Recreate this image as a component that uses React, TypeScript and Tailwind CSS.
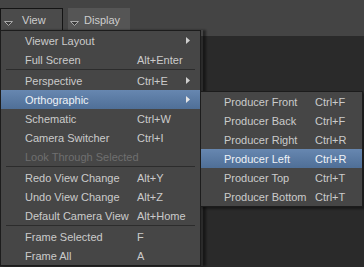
import React from "react";

type Item =
  | { type: "sep" }
  | { type: "item"; label: string; shortcut?: string; sub?: boolean; active?: boolean; disabled?: boolean };

const mainItems: Item[] = [
  { type: "item", label: "Viewer Layout", sub: true },
  { type: "item", label: "Full Screen", shortcut: "Alt+Enter" },
  { type: "sep" },
  { type: "item", label: "Perspective", shortcut: "Ctrl+E", sub: true },
  { type: "item", label: "Orthographic", sub: true, active: true },
  { type: "item", label: "Schematic", shortcut: "Ctrl+W" },
  { type: "item", label: "Camera Switcher", shortcut: "Ctrl+I" },
  { type: "item", label: "Look Through Selected", disabled: true },
  { type: "sep" },
  { type: "item", label: "Redo View Change", shortcut: "Alt+Y" },
  { type: "item", label: "Undo View Change", shortcut: "Alt+Z" },
  { type: "item", label: "Default Camera View", shortcut: "Alt+Home" },
  { type: "sep" },
  { type: "item", label: "Frame Selected", shortcut: "F" },
  { type: "item", label: "Frame All", shortcut: "A" },
];

const subItems = [
  { label: "Producer Front", shortcut: "Ctrl+F" },
  { label: "Producer Back", shortcut: "Ctrl+F" },
  { label: "Producer Right", shortcut: "Ctrl+R" },
  { label: "Producer Left", shortcut: "Ctrl+R", active: true },
  { label: "Producer Top", shortcut: "Ctrl+T" },
  { label: "Producer Bottom", shortcut: "Ctrl+T" },
];

function DownTri() {
  return (
    <svg width="9" height="5" viewBox="0 0 9 5" className="mt-[6px] shrink-0">
      <path d="M0.5 0.5 L8.5 0.5 L4.5 4.5 Z" fill="#3a3a3a" stroke="#a8a8a8" strokeWidth="1" />
    </svg>
  );
}

function RightArrow({ light }: { light?: boolean }) {
  return (
    <svg width="4" height="7" viewBox="0 0 4 7" className="absolute left-[185px] top-[6px]">
      <path d="M0 0 L4 3.5 L0 7 Z" fill={light ? "#e6e6e6" : "#cfcfcf"} />
    </svg>
  );
}

export default function App() {
  return (
    <div
      className="relative w-[364px] h-[267px] overflow-hidden bg-[#2a2a2a] text-[11px] text-[#cbcbcb]"
      style={{ fontFamily: '"Liberation Sans", Arial, sans-serif' }}
    >
      {/* toolbar */}
      <div className="flex h-[36px] items-start gap-[5px] bg-[#444444] pt-[8px]">
        <div className="flex h-[24px] w-[63px] items-center gap-[9px] border border-[#141414] bg-[#4b4b4b] pl-[3px]">
          <DownTri />
          <span className="text-[#cdcdcd]">View</span>
        </div>
        <div className="flex h-[24px] w-[62px] items-center gap-[5px] bg-[#555555] pl-[2px]">
          <DownTri />
          <span className="text-[#cdcdcd]">Display</span>
        </div>
      </div>

      {/* main menu */}
      <div className="absolute left-0 top-[30px] w-[203px] shadow-[3px_0_2px_rgba(0,0,0,0.45)]">
        <div className="border border-[#1c1c1c] bg-[#464646] w-[201px]">
          {mainItems.map((it, i) =>
            it.type === "sep" ? (
              <div key={i} className="h-[2px] pl-[5px] pr-[5px]">
                <div className="h-px bg-[#2c2c2c]" />
              </div>
            ) : (
              <div
                key={i}
                className={
                  "relative flex h-[19px] items-center pl-[24px] pt-[2px] " +
                  (it.active ? "bg-gradient-to-b from-[#6787b0] to-[#4f6f97] text-[#eef2f7]" : "") +
                  (it.disabled ? " text-[#6f6f6f]" : "")
                }
              >
                <span className="w-[112px] whitespace-nowrap">{it.label}</span>
                {it.shortcut && <span className="whitespace-nowrap">{it.shortcut}</span>}
                {it.sub && <RightArrow light={it.active} />}
              </div>
            )
          )}
        </div>
      </div>

      {/* submenu */}
      <div className="absolute left-[200px] top-[91px] w-[163px] border border-[#1c1c1c] bg-[#464646] shadow-[2px_2px_2px_rgba(0,0,0,0.4)]">
        {subItems.map((it, i) => (
          <div
            key={i}
            className={
              "flex h-[19px] items-center pl-[23px] pt-[2px] " +
              (it.active ? "bg-gradient-to-b from-[#6787b0] to-[#4f6f97] text-[#eef2f7]" : "")
            }
          >
            <span className="w-[91px] whitespace-nowrap">{it.label}</span>
            <span className="whitespace-nowrap">{it.shortcut}</span>
          </div>
        ))}
      </div>
    </div>
  );
}
